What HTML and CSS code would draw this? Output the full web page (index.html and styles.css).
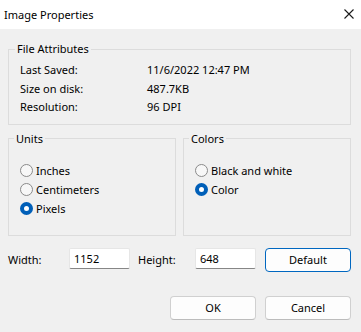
FILE: index.html
```html
<!DOCTYPE html>
<html lang="en">
<head>
    <meta charset="UTF-8">
    <meta name="viewport" content="width=device-width, initial-scale=1.0">
    <title>Image Properties</title>
    <link rel="stylesheet" href="styles.css">
</head>
<body>
    <div class="window">
        <div class="titlebar">
            <span class="title">Image Properties</span>
            <svg class="close" width="10" height="10" viewBox="0 0 10 10">
                <path d="M0.5 0.5 L9.5 9.5 M9.5 0.5 L0.5 9.5" stroke="#1a1a1a" stroke-width="1.1" fill="none"/>
            </svg>
        </div>

        <div class="body">
            <fieldset class="group attrs">
                <legend>File Attributes</legend>
                <div class="info">
                    <span>Last Saved:</span><span>11/6/2022 12:47 PM</span>
                    <span>Size on disk:</span><span>487.7KB</span>
                    <span>Resolution:</span><span>96 DPI</span>
                </div>
            </fieldset>

            <div class="split">
                <fieldset class="group options">
                    <legend>Units</legend>
                    <label class="radio"><span class="dot"></span>Inches</label>
                    <label class="radio"><span class="dot"></span>Centimeters</label>
                    <label class="radio"><span class="dot checked"></span>Pixels</label>
                </fieldset>
                <fieldset class="group options">
                    <legend>Colors</legend>
                    <label class="radio"><span class="dot"></span>Black and white</label>
                    <label class="radio"><span class="dot checked"></span>Color</label>
                </fieldset>
            </div>

            <div class="size-row">
                <label class="size-label" for="width">Width:</label>
                <input type="text" id="width" class="field" value="1152">
                <label class="size-label height" for="height">Height:</label>
                <input type="text" id="height" class="field" value="648">
                <button type="button" class="btn primary">Default</button>
            </div>

            <div class="actions">
                <button type="button" class="btn">OK</button>
                <button type="button" class="btn">Cancel</button>
            </div>
        </div>
    </div>
</body>
</html>
```

FILE: styles.css
```css
body {
    margin: 0;
    background-color: #f0f0f0;
    font-family: "Noto Sans", "Open Sans", sans-serif;
    font-size: 11px;
    color: #000;
}
.window {
    width: 361px;
    height: 332px;
    overflow: hidden;
}
.titlebar {
    height: 29px;
    background: #fff;
    display: flex;
    align-items: center;
    justify-content: space-between;
    padding: 0 7px 0 4px;
}
.title {
    margin-top: -1px;
}
.close {
    display: block;
    margin-top: -1px;
}
.body {
    padding: 0 10px 0 8px;
}
.group {
    margin: 0;
    border: 1px solid #dcdcdc;
    padding: 0 6px;
    min-width: 0;
}
.group legend {
    padding: 0 2px;
    line-height: 16px;
}
.attrs {
    margin-top: 12px;
    padding-top: 4px;
    padding-bottom: 7px;
}
.info {
    display: grid;
    grid-template-columns: 127px 1fr;
    grid-auto-rows: 18.5px;
    line-height: 18.5px;
    padding-left: 5px;
}
.split {
    display: flex;
    gap: 7px;
    margin-top: 6px;
}
.options {
    flex: 1;
    height: 105px;
    box-sizing: border-box;
    padding-top: 14px;
    padding-left: 5px;
}
.radio {
    display: flex;
    align-items: center;
    height: 19px;
    padding-left: 6px;
}
.dot {
    width: 11px;
    height: 11px;
    border: 1px solid #8a8a8a;
    border-radius: 50%;
    background: #f7f7f7;
    margin-right: 3px;
    flex: none;
}
.dot.checked {
    width: 5px;
    height: 5px;
    border: 4px solid #005fb8;
    background: #fff;
}
.size-row {
    display: flex;
    align-items: center;
    margin-top: 12px;
    height: 24px;
}
.size-label {
    width: 61px;
}
.size-label.height {
    width: 57px;
}
.field {
    width: 61px;
    height: 21px;
    box-sizing: border-box;
    margin: 0 8px 3px 0;
    padding: 0 4px;
    border: 1px solid #e6e6e6;
    border-bottom-color: #868686;
    border-radius: 2px;
    background: #fff;
    font: inherit;
    color: #000;
    outline: none;
}
.btn {
    width: 86px;
    height: 24px;
    box-sizing: border-box;
    border: 1px solid #d0d0d0;
    border-bottom-color: #bcbcbc;
    border-radius: 4px;
    background: #fdfdfd;
    font: inherit;
    color: #000;
    padding: 0;
}
.btn.primary {
    margin-left: 1px;
    border: 1px solid #0067c0;
}
.actions {
    display: flex;
    justify-content: flex-end;
    gap: 9px;
    margin-top: 24px;
}
```
